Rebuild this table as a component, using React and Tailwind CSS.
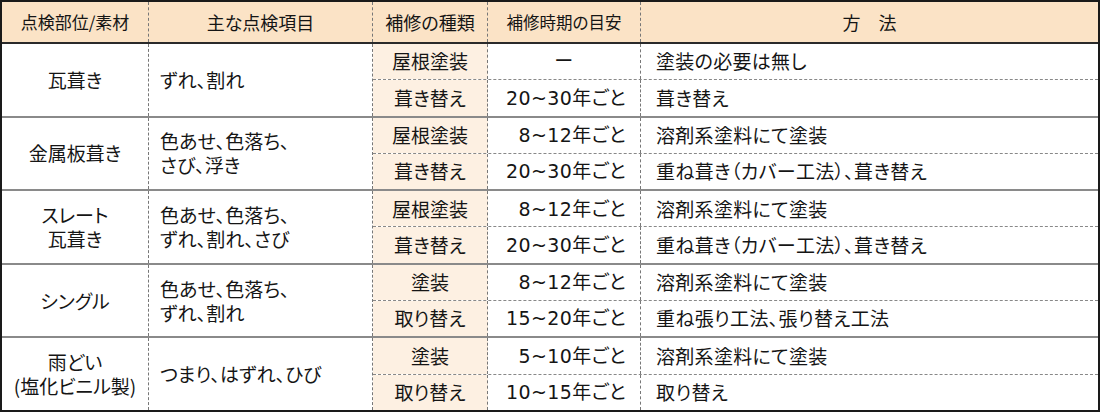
import React from 'react';

const groups = [
  {
    name: ['瓦葺き'],
    items: ['ずれ、割れ'],
    rows: [
      ['屋根塗装', 'ー', '塗装の必要は無し'],
      ['葺き替え', '20~30年ごと', '葺き替え'],
    ],
  },
  {
    name: ['金属板葺き'],
    items: ['色あせ、色落ち、', 'さび、浮き'],
    rows: [
      ['屋根塗装', '8~12年ごと', '溶剤系塗料にて塗装'],
      ['葺き替え', '20~30年ごと', '重ね葺き（カバー工法）、葺き替え'],
    ],
  },
  {
    name: ['スレート', '瓦葺き'],
    items: ['色あせ、色落ち、', 'ずれ、割れ、さび'],
    rows: [
      ['屋根塗装', '8~12年ごと', '溶剤系塗料にて塗装'],
      ['葺き替え', '20~30年ごと', '重ね葺き（カバー工法）、葺き替え'],
    ],
  },
  {
    name: ['シングル'],
    items: ['色あせ、色落ち、', 'ずれ、割れ'],
    rows: [
      ['塗装', '8~12年ごと', '溶剤系塗料にて塗装'],
      ['取り替え', '15~20年ごと', '重ね張り工法、張り替え工法'],
    ],
  },
  {
    name: ['雨どい', '(塩化ビニル製)'],
    items: ['つまり、はずれ、ひび'],
    rows: [
      ['塗装', '5~10年ごと', '溶剤系塗料にて塗装'],
      ['取り替え', '10~15年ごと', '取り替え'],
    ],
  },
];

// multi-line cell text, kept in one element
const Lines = ({ lines }) => (
  <div>
    {lines.map((l, i) => (
      <React.Fragment key={i}>
        {i > 0 && <br />}
        {l}
      </React.Fragment>
    ))}
  </div>
);

const App = () => {
  return (
    <div className="w-[1100px] h-[412px] bg-white font-['Noto_Sans_CJK_JP','Noto_Sans',sans-serif] text-[#151515] [font-feature-settings:'palt']">
      <div className="w-full h-full border-2 border-[#1a1a1a] flex flex-col">
        {/* header */}
        <div className="h-[42px] flex bg-[#fbe3c6] border-b-2 border-[#2a2a2a] text-[17px]">
          <div className="w-[147px] flex items-center justify-center border-r border-dashed border-[#777]">点検部位/素材</div>
          <div className="w-[224px] flex items-center justify-center border-r border-dashed border-[#777] text-[18px]">主な点検項目</div>
          <div className="w-[115px] flex items-center justify-center border-r border-dashed border-[#777] text-[18px]">補修の種類</div>
          <div className="w-[153px] flex items-center justify-center border-r border-dashed border-[#777] text-[16.5px]">補修時期の目安</div>
          <div className="flex-1 flex items-center justify-center text-[18px]">方　法</div>
        </div>

        {groups.map((g, gi) => (
          <div key={gi} className={`flex flex-1 text-[19px] ${gi > 0 ? 'border-t-2 border-[#8a8a8a]' : ''}`}>
            <div className="w-[147px] flex items-center justify-center text-center leading-[24px] border-r border-dashed border-[#777]">
              <Lines lines={g.name} />
            </div>
            <div className="w-[224px] flex items-center pl-[11px] leading-[24px] border-r border-dashed border-[#777]">
              <Lines lines={g.items} />
            </div>
            <div className="flex-1 flex flex-col">
              {g.rows.map((r, ri) => (
                <div key={ri} className={`flex flex-1 ${ri > 0 ? 'border-t border-dashed border-[#888]' : ''}`}>
                  <div className="w-[115px] flex items-center justify-center bg-[#fdf0e2] border-r border-dashed border-[#777]">{r[0]}</div>
                  <div className={`w-[153px] flex items-center border-r border-dashed border-[#777] font-['DejaVu_Sans','Noto_Sans_CJK_JP',sans-serif] tracking-[0.4px] ${r[1] === 'ー' ? 'justify-center' : 'justify-end pr-[14px]'}`}>{r[1]}</div>
                  <div className="flex-1 flex items-center pl-[15px] tracking-[0.3px]">{r[2]}</div>
                </div>
              ))}
            </div>
          </div>
        ))}
      </div>
    </div>
  );
};

export default App;
